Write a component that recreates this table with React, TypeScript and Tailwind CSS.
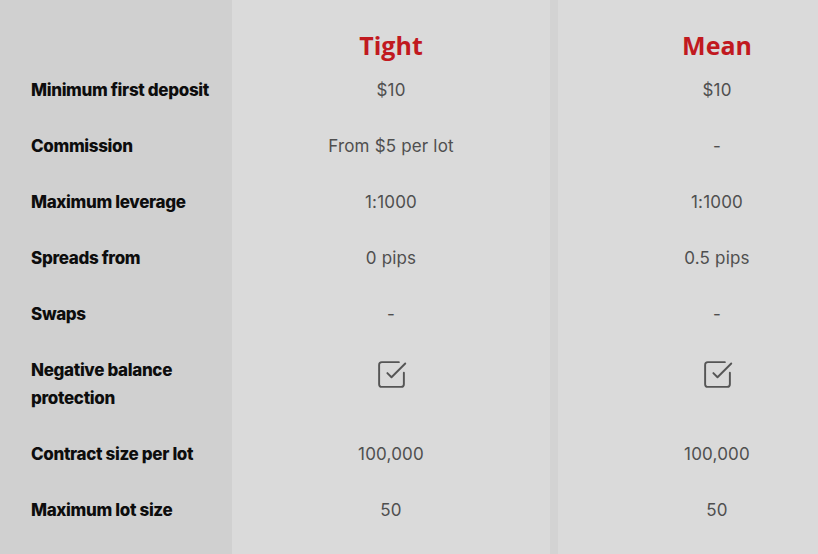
import React from "react";
import { SquareCheckBig } from "lucide-react";

type Row = { label: string; tight: React.ReactNode; mean: React.ReactNode; tall?: boolean };

const Check = () => (
  <div className="flex justify-center pt-[2px]">
    <SquareCheckBig size={33} strokeWidth={1.4} color="#555555" />
  </div>
);

const rows: Row[] = [
  { label: "Minimum first deposit", tight: "$10", mean: "$10" },
  { label: "Commission", tight: "From $5 per lot", mean: "-" },
  { label: "Maximum leverage", tight: "1:1000", mean: "1:1000" },
  { label: "Spreads from", tight: "0 pips", mean: "0.5 pips" },
  { label: "Swaps", tight: "-", mean: "-" },
  { label: "Negative balance protection", tight: <Check />, mean: <Check />, tall: true },
  { label: "Contract size per lot", tight: "100,000", mean: "100,000" },
  { label: "Maximum lot size", tight: "50", mean: "50" },
];

const valueFont = { fontFamily: "Inter, 'Noto Sans', sans-serif" };

function ValueColumn({ title, keyName }: { title: string; keyName: "tight" | "mean" }) {
  return (
    <div className="w-[318px] shrink-0 bg-[#dadada] flex flex-col">
      <div className="h-[62px] flex items-end justify-center pb-[1px]">
        <span
          className="text-[25px] font-bold text-[#c1191f] leading-[32px]"
          style={{ fontFamily: "'Open Sans', sans-serif" }}
        >
          {title}
        </span>
      </div>
      {rows.map((r) => (
        <div
          key={r.label}
          className={`${r.tall ? "h-[84px]" : "h-[56px]"} py-[14px] text-center text-[17px] tracking-[0.01em] leading-[28px] text-[#4f4f4f]`}
          style={valueFont}
        >
          {r[keyName]}
        </div>
      ))}
    </div>
  );
}

export default function App() {
  return (
    <div className="w-[818px] h-[554px] overflow-hidden flex bg-[#d3d3d3]">
      <div className="w-[232px] shrink-0 bg-[#d0d0d0] flex flex-col pl-[31px] pr-[10px]">
        <div className="h-[62px]" />
        {rows.map((r) => (
          <div
            key={r.label}
            className={`${r.tall ? "h-[84px]" : "h-[56px]"} py-[14px] text-[17px] leading-[28px] font-extrabold text-[#0d0d0d] tracking-[-0.02em]`}
            style={{ fontFamily: "Inter, 'Noto Sans', sans-serif" }}
          >
            {r.label}
          </div>
        ))}
      </div>
      <div className="flex gap-[8px] shrink-0">
        <ValueColumn title="Tight" keyName="tight" />
        <ValueColumn title="Mean" keyName="mean" />
      </div>
    </div>
  );
}
